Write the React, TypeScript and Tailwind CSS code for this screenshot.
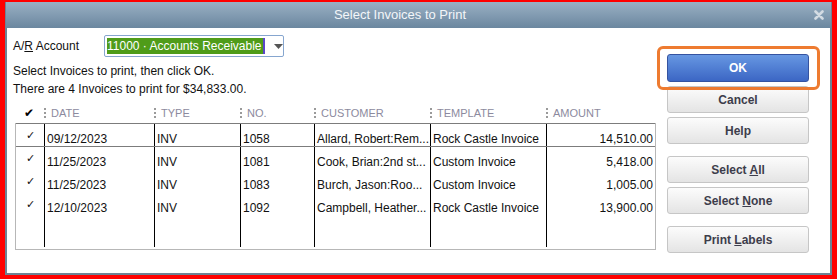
import React from 'react';

const font = { fontFamily: '"Liberation Sans", Arial, sans-serif' };
const cols = 'grid grid-cols-[29px_110px_86px_74px_116px_116px_108px]';

const rows = [
  { date: '09/12/2023', type: 'INV', no: '1058', customer: 'Allard, Robert:Rem...', template: 'Rock Castle Invoice', amount: '14,510.00' },
  { date: '11/25/2023', type: 'INV', no: '1081', customer: 'Cook, Brian:2nd st...', template: 'Custom Invoice', amount: '5,418.00' },
  { date: '11/25/2023', type: 'INV', no: '1083', customer: 'Burch, Jason:Roo...', template: 'Custom Invoice', amount: '1,005.00' },
  { date: '12/10/2023', type: 'INV', no: '1092', customer: 'Campbell, Heather...', template: 'Rock Castle Invoice', amount: '13,900.00' },
];

function Btn({ children }: { children: React.ReactNode }) {
  return (
    <button className="h-[27px] w-full rounded-[3px] border border-[#c6c6c6] bg-gradient-to-b from-[#fcfcfc] to-[#e4e4e4] text-[12px] font-bold text-[#3d3d4b]">
      {children}
    </button>
  );
}

function HeadCell({ label }: { label: string }) {
  return (
    <div className="flex items-center -ml-[1px]">
      <span className="h-[10px] border-l-2 border-dotted border-[#9a9a9a]" />
      <span className="pl-[5px] text-[11px] text-[#8c8a9e]">{label}</span>
    </div>
  );
}

export default function App() {
  return (
    <div className="w-[837px] h-[279px] bg-[#ff0000] pt-[2px] pl-[5px] pr-[5px] pb-[4px]" style={font}>
      <div className="h-full flex flex-col bg-[#6d8294] px-[2px] pb-[2px]">
        {/* title bar */}
        <div className="h-[26px] -mx-[1px] flex items-center bg-gradient-to-b from-[#9ab0c4] to-[#6b879f]">
          <div className="flex-1 text-center pl-[2px] pr-[22px] text-[13px] text-[#f3f6f9]">Select Invoices to Print</div>
          <svg width="10" height="10" viewBox="0 0 10 10" className="mr-[7px]">
            <path d="M1.5 1.5 L8.5 8.5 M8.5 1.5 L1.5 8.5" stroke="#d3dbe3" strokeWidth="2.6" strokeLinecap="round" />
          </svg>
        </div>

        <div className="flex-1 flex bg-white pl-[6px] pr-[20px]">
          {/* left side */}
          <div className="w-[643px] flex flex-col text-[12px] text-[#111]">
            <div className="flex items-center h-[22px] mt-[7px]">
              <span className="w-[91px]">A/<span className="underline">R</span> Account</span>
              <div className="flex items-center w-[180px] h-[22px] rounded-[2px] border border-[#86a6cf] bg-white pl-[2px]">
                <span className="h-[16px] leading-[16px] bg-[#4f9c19] text-white pr-[1px]">11000 · Accounts Receivable</span>
                <span className="w-[2px] h-[16px] bg-[#5b46c9]" />
                <svg width="9" height="5" viewBox="0 0 9 5" className="ml-[9px]">
                  <path d="M0 0 H9 L4.5 5 Z" fill="#555" />
                </svg>
              </div>
            </div>
            <div className="mt-[5px] leading-[18px]">Select Invoices to print, then click OK.</div>
            <div className="leading-[18px]">There are 4 Invoices to print for $34,833.00.</div>

            {/* header */}
            <div className={`${cols} h-[20px] mt-[5px] ml-[3px]`}>
              <div className="flex items-center pl-[8px] text-[12px] text-black" style={{ fontFamily: '"DejaVu Sans", sans-serif' }}>✔</div>
              <HeadCell label="DATE" />
              <HeadCell label="TYPE" />
              <HeadCell label="NO." />
              <HeadCell label="CUSTOMER" />
              <HeadCell label="TEMPLATE" />
              <HeadCell label="AMOUNT" />
            </div>

            {/* table */}
            <div className="ml-[2px] w-[641px] h-[127px] border border-[#b7b7b7] flex flex-col">
              {rows.map((r, i) => (
                <div
                  key={r.no}
                  className={`${cols} h-[23px] ${i === 0 ? 'border-y border-[#7c7c7c] -mt-[1px] h-[24px]' : ''}`}
                >
                  <div className="border-r border-black text-center text-[11px] leading-[14px] pt-[5px] pl-[1px]" style={{ fontFamily: '"DejaVu Sans", sans-serif' }}>✓</div>
                  <div className="border-r border-black pl-[2px] pt-[8px] leading-[14px]">{r.date}</div>
                  <div className="border-r border-black pl-[2px] pt-[8px] leading-[14px]">{r.type}</div>
                  <div className="border-r border-black pl-[2px] pt-[8px] leading-[14px]">{r.no}</div>
                  <div className="border-r border-black pl-[2px] pt-[8px] leading-[14px] whitespace-nowrap overflow-hidden">{r.customer}</div>
                  <div className="border-r border-black pl-[2px] pt-[8px] leading-[14px] whitespace-nowrap overflow-hidden">{r.template}</div>
                  <div className="pr-[2px] pt-[8px] leading-[14px] text-right">{r.amount}</div>
                </div>
              ))}
              <div className={`${cols} flex-1 pb-[2px]`}>
                <div className="border-r border-black" />
                <div className="border-r border-black" />
                <div className="border-r border-black" />
                <div className="border-r border-black" />
                <div className="border-r border-black" />
                <div className="border-r border-black" />
                <div />
              </div>
            </div>
          </div>

          {/* buttons */}
          <div className="ml-[11px] w-[142px] flex flex-col pt-[26px]">
            <div className="relative">
              <button className="h-[28px] w-full rounded-[3px] border border-[#3553a0] bg-gradient-to-b from-[#6797e2] to-[#3c66c4] text-[12px] font-bold text-white">
                OK
              </button>
              <div className="absolute -left-[10px] -right-[11px] -top-[8px] -bottom-[8px] rounded-[6px] border-[3px] border-[#ee7b30]" />
            </div>
            <div className="flex flex-col gap-[4px] mt-[4px]">
              <Btn>Cancel</Btn>
              <Btn>Help</Btn>
            </div>
            <div className="flex flex-col gap-[4px] mt-[12px]">
              <Btn>Select <span className="underline">A</span>ll</Btn>
              <Btn>Select <span className="underline">N</span>one</Btn>
            </div>
            <div className="mt-[12px]">
              <Btn>Print <span className="underline">L</span>abels</Btn>
            </div>
          </div>
        </div>
      </div>
    </div>
  );
}
